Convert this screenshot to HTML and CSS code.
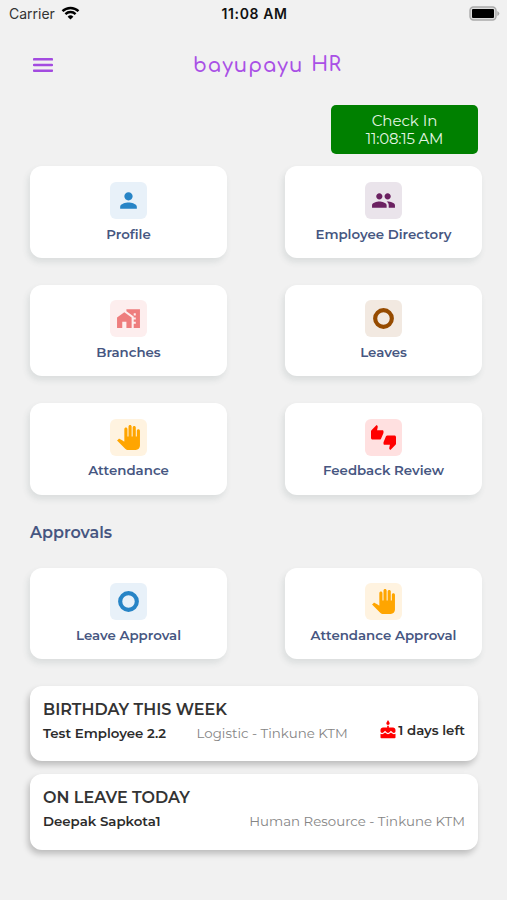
FILE: index.html
```html
<!DOCTYPE html>
<html lang="en">
<head>
  <meta charset="UTF-8">
  <title>bayupayu HR</title>
  <link rel="stylesheet" href="styles.css">
</head>
<body>

  <div class="status-bar">
    <div class="carrier">
      <span>Carrier</span>
      <svg class="wifi" viewBox="0 0 18 14">
        <path d="M1 5.2a11.5 11.5 0 0 1 16 0" />
        <path d="M3.9 8.1a7.4 7.4 0 0 1 10.2 0" />
        <path class="wifi-dot" d="M9 13.6L6.1 10.7a4.1 4.1 0 0 1 5.8 0z" />
      </svg>
    </div>
    <span class="clock">11:08 AM</span>
    <svg class="battery" viewBox="0 0 31 15">
      <rect class="battery-case" x="1" y="1" width="26" height="13" rx="3.5" />
      <rect x="3" y="3" width="22" height="9" rx="1" />
      <path class="battery-tip" d="M28.3 5v5q2-1 2-2.5t-2-2.5z" />
    </svg>
  </div>

  <div class="navbar">
    <svg class="menu" viewBox="0 0 20 14">
      <path d="M1 1.3h18M1 7h18M1 12.7h18" />
    </svg>
    <h1><span class="brand">bayupayu</span><span class="brand-hr">HR</span></h1>
  </div>

  <div class="container">
    <button class="check-in"><span>Check In</span><span class="check-time">11:08:15 AM</span></button>

    <div class="grid">
      <div class="card">
        <div class="icon blue">
          <svg viewBox="0 0 24 24"><path d="M12 12c2.21 0 4-1.79 4-4s-1.79-4-4-4-4 1.79-4 4 1.79 4 4 4zm0 2c-2.67 0-8 1.34-8 4v2h16v-2c0-2.66-5.33-4-8-4z"/></svg>
        </div>
        <span class="label">Profile</span>
      </div>
      <div class="card">
        <div class="icon purple">
          <svg viewBox="0 0 24 24"><path d="M16 11c1.66 0 2.99-1.34 2.99-3S17.66 5 16 5c-1.66 0-3 1.34-3 3s1.34 3 3 3zm-8 0c1.66 0 2.99-1.34 2.99-3S9.66 5 8 5C6.34 5 5 6.34 5 8s1.34 3 3 3zm0 2c-2.33 0-7 1.17-7 3.5V19h14v-2.5c0-2.33-4.67-3.5-7-3.5zm8 0c-.29 0-.62.02-.97.05 1.16.84 1.97 1.97 1.97 3.45V19h6v-2.5c0-2.33-4.67-3.5-7-3.5z"/></svg>
        </div>
        <span class="label">Employee Directory</span>
      </div>
      <div class="card">
        <div class="icon coral">
          <svg viewBox="0 0 24 24"><path d="M1 11v10h5v-6h4v6h5V11L8 6zM10 3v1.97l7 5V11h2v2h-2v2h2v2h-2v4h6V3H10zm9 6h-2V7h2v2z"/></svg>
        </div>
        <span class="label">Branches</span>
      </div>
      <div class="card">
        <div class="icon brown">
          <svg viewBox="0 0 24 24"><circle class="ring" cx="12" cy="12" r="8"/></svg>
        </div>
        <span class="label">Leaves</span>
      </div>
      <div class="card">
        <div class="icon orange">
          <svg viewBox="0 0 24 24"><path d="M23 5.5V20c0 2.2-1.8 4-4 4h-7.3c-1.08 0-2.1-.43-2.85-1.19L1 14.83s1.26-1.23 1.3-1.25c.22-.19.49-.29.79-.29.22 0 .42.06.6.16.04.01 4.31 2.46 4.31 2.46V4c0-.83.67-1.5 1.5-1.5S11 3.17 11 4v7h1V1.5c0-.83.67-1.5 1.5-1.5S15 .67 15 1.5V11h1V2.5c0-.83.67-1.5 1.5-1.5s1.5.67 1.5 1.5V11h1V5.5c0-.83.67-1.5 1.5-1.5s1.5.67 1.5 1.5z"/></svg>
        </div>
        <span class="label">Attendance</span>
      </div>
      <div class="card">
        <div class="icon red">
          <svg viewBox="0 0 24 24"><path d="M12 6c0-.55-.45-1-1-1H5.82l.66-3.18.02-.23c0-.31-.13-.59-.33-.8L5.38 0 .44 4.94C.17 5.21 0 5.59 0 6v6.5c0 .83.67 1.5 1.5 1.5h6.75c.62 0 1.15-.38 1.38-.91l2.26-5.29c.07-.17.11-.36.11-.55V6zm10.5 4h-6.75c-.62 0-1.15.38-1.38.91l-2.26 5.29c-.07.17-.11.36-.11.55V18c0 .55.45 1 1 1h5.18l-.66 3.18-.02.24c0 .31.13.59.33.8l.79.78 4.94-4.94c.27-.27.44-.65.44-1.06v-6.5c0-.83-.67-1.5-1.5-1.5z"/></svg>
        </div>
        <span class="label">Feedback Review</span>
      </div>
    </div>

    <h2>Approvals</h2>

    <div class="grid">
      <div class="card">
        <div class="icon blue">
          <svg viewBox="0 0 24 24"><circle class="ring" cx="12" cy="12" r="8"/></svg>
        </div>
        <span class="label">Leave Approval</span>
      </div>
      <div class="card">
        <div class="icon orange">
          <svg viewBox="0 0 24 24"><path d="M23 5.5V20c0 2.2-1.8 4-4 4h-7.3c-1.08 0-2.1-.43-2.85-1.19L1 14.83s1.26-1.23 1.3-1.25c.22-.19.49-.29.79-.29.22 0 .42.06.6.16.04.01 4.31 2.46 4.31 2.46V4c0-.83.67-1.5 1.5-1.5S11 3.17 11 4v7h1V1.5c0-.83.67-1.5 1.5-1.5S15 .67 15 1.5V11h1V2.5c0-.83.67-1.5 1.5-1.5s1.5.67 1.5 1.5V11h1V5.5c0-.83.67-1.5 1.5-1.5s1.5.67 1.5 1.5z"/></svg>
        </div>
        <span class="label">Attendance Approval</span>
      </div>
    </div>

    <div class="notice">
      <h3>BIRTHDAY THIS WEEK</h3>
      <div class="notice-row">
        <span class="name">Test Employee 2.2</span>
        <span class="department">Logistic - Tinkune KTM</span>
        <span class="days-left">
          <svg class="cake" viewBox="0 0 24 24"><path d="M12 6c1.11 0 2-.9 2-2 0-.38-.1-.73-.29-1.03L12 0l-1.71 2.97c-.19.3-.29.65-.29 1.03 0 1.1.9 2 2 2zm4.6 9.99l-1.07-1.07-1.08 1.07c-1.3 1.3-3.58 1.31-4.89 0l-1.07-1.07-1.09 1.07C6.75 16.64 5.88 17 4.96 17c-.73 0-1.4-.23-1.96-.61V21c0 .55.45 1 1 1h16c.55 0 1-.45 1-1v-4.61c-.56.38-1.23.61-1.96.61-.92 0-1.79-.36-2.44-1.01zM18 9h-5V7h-2v2H6c-1.66 0-3 1.34-3 3v1.54c0 1.08.88 1.96 1.96 1.96.52 0 1.02-.2 1.38-.57l2.14-2.13 2.13 2.13c.74.74 2.03.74 2.77 0l2.14-2.13 2.13 2.13c.37.37.86.57 1.38.57 1.08 0 1.96-.88 1.96-1.96V12C21 10.34 19.66 9 18 9z"/></svg>
          <span>1 days left</span>
        </span>
      </div>
    </div>

    <div class="notice">
      <h3>ON LEAVE TODAY</h3>
      <div class="notice-row">
        <span class="name">Deepak Sapkota1</span>
        <span class="department">Human Resource - Tinkune KTM</span>
      </div>
    </div>
  </div>

</body>
</html>
```
FILE: styles.css
```css
* {
  box-sizing: border-box;
}

body {
  font-family: Montserrat, Inter, sans-serif;
  background-color: #f1f1f1;
  margin: 0;
  height: 900px;
  overflow: hidden;
}

svg {
  display: block;
}

.status-bar {
  height: 27px;
  padding: 0 7px 0 9px;
  display: grid;
  grid-template-columns: 1fr auto 1fr;
  align-items: center;
  font-family: Inter, sans-serif;
  font-size: 14px;
  color: #333;
}

.carrier {
  display: flex;
  align-items: center;
  gap: 6px;
}

.wifi {
  width: 19px;
  height: 14px;
  margin-top: -2px;
  fill: none;
  stroke: #000;
  stroke-width: 2.4;
}

.wifi-dot {
  fill: #000;
  stroke: none;
}

.clock {
  font-weight: 600;
  letter-spacing: 0.6px;
  color: #111;
}

.battery {
  width: 31px;
  height: 15px;
  margin-top: -1px;
  justify-self: end;
}

.battery-case {
  fill: #ddd;
  stroke: #aaa;
  stroke-width: 1.4;
}

.battery-tip {
  fill: #aaa;
}

.navbar {
  height: 78px;
  padding: 31px 33px 0;
  display: flex;
  align-items: flex-start;
}

.menu {
  width: 20px;
  height: 14px;
  fill: none;
  stroke: #a34be0;
  stroke-width: 2.5;
  stroke-linecap: round;
}

.navbar h1 {
  display: flex;
  gap: 8px;
  margin: -5px 0 0 140px;
  font-family: Comfortaa, Lato, sans-serif;
  font-size: 19.5px;
  font-weight: 600;
  line-height: 26px;
  color: #a950e6;
}

.brand {
  letter-spacing: 1.1px;
}

.brand-hr {
  margin-top: -1px;
  letter-spacing: 0.3px;
}

.container {
  padding: 0 24px 0 30px;
}

.check-in {
  display: flex;
  flex-direction: column;
  align-items: center;
  width: 147px;
  height: 49px;
  margin: 0 0 12.4px 301px;
  padding: 6.5px 0 0;
  border: none;
  border-radius: 5px;
  background-color: #008000;
  color: #e4f5e4;
  font-family: inherit;
  font-size: 15px;
  line-height: 18.5px;
}

.check-time {
  letter-spacing: -0.2px;
}

.grid {
  display: grid;
  grid-template-columns: 197px 197px;
  column-gap: 58px;
  row-gap: 27px;
}

.card {
  height: 91.4px;
  padding-top: 15.7px;
  display: flex;
  flex-direction: column;
  align-items: center;
  background: #fff;
  border-radius: 12px;
  box-shadow: -2px 4px 6px rgba(60, 80, 80, 0.12);
}

.icon {
  width: 37px;
  height: 37px;
  display: flex;
  align-items: center;
  justify-content: center;
  border-radius: 6px;
}

.icon svg {
  width: 25px;
  height: 25px;
  fill: currentColor;
}

.icon .ring {
  fill: none;
  stroke: currentColor;
  stroke-width: 4;
}

.blue {
  color: #2784c6;
  background: #e8f1f9;
}

.purple {
  color: #6b2161;
  background: #eae4eb;
}

.coral {
  color: #ee7d7d;
  background: #fdeeee;
}

.brown {
  color: #964b00;
  background: #f2e9e1;
}

.orange {
  color: #ffa500;
  background: #fff3e0;
}

.red {
  color: #ff0000;
  background: #ffe0e0;
}

.label {
  margin-top: 5.6px;
  font-size: 13.35px;
  font-weight: 600;
  line-height: 18px;
  color: #465681;
  white-space: nowrap;
}

h2 {
  margin: 28px 0 25px;
  font-size: 16px;
  font-weight: 600;
  line-height: 20px;
  color: #465681;
}

.notice {
  width: 448px;
  height: 75.5px;
  margin-top: 13px;
  padding: 13.7px 13px 0;
  background: #fff;
  border-radius: 12px;
  box-shadow: -2px 4px 6px rgba(0, 0, 0, 0.22);
}

.grid + .notice {
  margin-top: 27px;
}

.notice h3 {
  margin: 0;
  font-size: 16px;
  font-weight: 600;
  line-height: 20px;
  color: #333;
}

.notice-row {
  display: flex;
  justify-content: space-between;
  margin-top: 4.3px;
  font-size: 13.35px;
  line-height: 18px;
  white-space: nowrap;
}

.name,
.days-left {
  font-weight: 600;
  color: #2b2b2b;
}

.department {
  color: #858585;
}

.days-left {
  display: flex;
  align-items: center;
  margin-top: -6px;
}

.cake {
  width: 20px;
  height: 20px;
  fill: #ff0000;
}
```
